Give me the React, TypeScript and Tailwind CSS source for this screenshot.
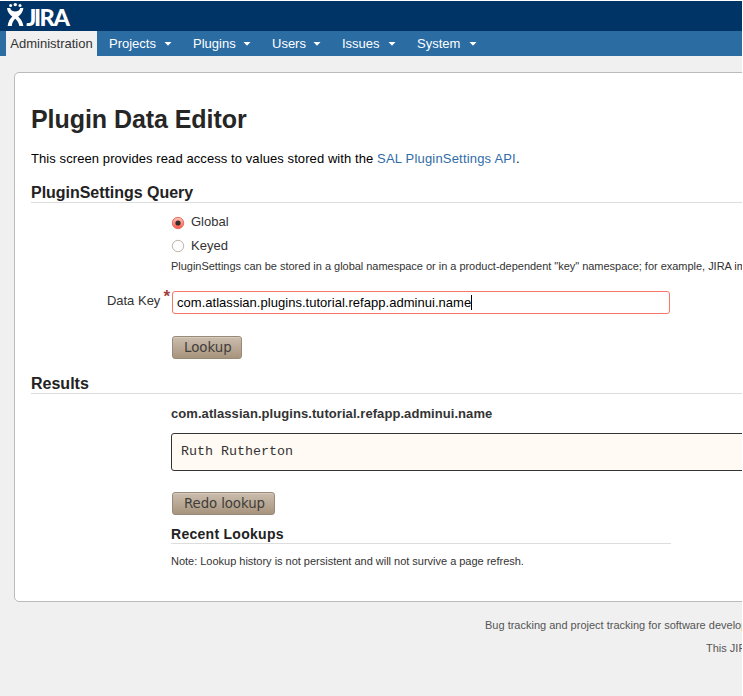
import React from "react";

const menus = [
  { label: "Projects", width: "w-[84px]" },
  { label: "Plugins", width: "w-[79px]" },
  { label: "Users", width: "w-[70px]" },
  { label: "Issues", width: "w-[75px]" },
  { label: "System", width: "w-[81px]" },
];

function Logo() {
  return (
    <svg width="80" height="30" viewBox="0 0 80 30" role="img" aria-label="JIRA" className="block">
      <g fill="#fff">
        <circle cx="5.6" cy="4.4" r="1.5" />
        <circle cx="10.3" cy="3.6" r="1.7" />
        <circle cx="15" cy="4.4" r="1.5" />
        <path d="M2 7 L5.2 7 C5.8 9.6 8 10.4 10.2 10.4 C12.4 10.4 14.6 9.6 15.2 7 L18.4 7 C18 11 15.8 13.8 13.2 15.6 C15.8 18 17.6 21 18.4 25 L14.4 25 C13.6 21.6 12 19.2 10.2 17.8 C8.6 19.2 7.2 21.6 6.8 25 L2.6 25 C3.2 21 4.8 17.8 7.3 15.5 C4.7 13.7 2.3 11 2 7 Z" />
      </g>
      <text
        x="21.2 29 34.6 48.6"
        y="25.2 24.6 24.6 24.6"
        fill="#fff"
        fontFamily="Lato, sans-serif"
        fontWeight="900"
        fontSize="23.5"
      >
        JIRA
      </text>
    </svg>
  );
}

function Caret() {
  return (
    <svg width="8" height="4" viewBox="0 0 8 4" fill="#fff">
      <path d="M0.5 0H7.5L4 3.7Z" />
    </svg>
  );
}

function Button({ children, className }: { children: React.ReactNode; className: string }) {
  return (
    <button
      className={`block h-[23px] rounded-[3px] border border-[#998a77] bg-linear-to-b from-[#cbbdae] to-[#a7947d] pl-[11px] text-left font-['DejaVu_Sans',sans-serif] text-[13.33px] leading-[20px] text-[#403e3b] shadow-[inset_0_1px_0_#d6cbbf] ${className}`}
    >
      {children}
    </button>
  );
}

function Radio({ checked, label }: { checked?: boolean; label: string }) {
  return (
    <label className="flex h-6 items-center">
      <svg width="14" height="14" viewBox="0 0 14 14" className={checked ? "mt-[2px]" : ""}>
        <defs>
          <linearGradient id="dot" x1="0" y1="0" x2="0" y2="1">
            <stop offset="0" stopColor="#ffc4bb" />
            <stop offset="1" stopColor="#fb5a48" />
          </linearGradient>
        </defs>
        <circle cx="7" cy="7" r="5.7" fill={checked ? "url(#dot)" : "#fff"} stroke={checked ? "#e8705f" : "#c0b7a8"} />
        {checked && <circle cx="7" cy="7" r="2.6" fill="#352b29" />}
      </svg>
      <span className="ml-[6px]">{label}</span>
    </label>
  );
}

export default function App() {
  return (
    <div className="h-[696px] w-[742px] overflow-hidden bg-[#f0f0f0] font-['Liberation_Sans',Arial,sans-serif] text-[13px] text-[#333]">
      <header className="h-[31px] border-t border-white bg-[#003366] pl-[5px]">
        <Logo />
      </header>
      <nav className="flex h-[25px] bg-[#2b6ca3] pl-[6px] leading-[25px] text-white">
        <div className="w-[91px] bg-[#f0f0f0] text-center text-[#333]">Administration</div>
        {menus.map((m) => (
          <div key={m.label} className={`flex items-center justify-between pl-3 pr-[9px] ${m.width} whitespace-nowrap`}>
            <span>{m.label}</span>
            <Caret />
          </div>
        ))}
      </nav>

      <main className="ml-[14px] mt-4 h-[530px] w-[1000px] rounded-[5px] border border-[#bbb] bg-white pl-4 pt-[31px]">
        <h1 className="text-[25px] font-bold leading-[30px] tracking-[-0.06px] text-[#262626]">Plugin Data Editor</h1>
        <p className="mt-[15px] leading-5 tracking-[0.085px] text-black">
          This screen provides read access to values stored with the <a className="tracking-[0.19px] text-[#326ca6]">SAL PluginSettings API</a>.
        </p>
        <h2 className="mt-[14px] h-5 border-b border-[#ddd] text-[16px] font-bold leading-5 tracking-[-0.03px] text-[#222]">PluginSettings Query</h2>

        <div className="ml-[140px] mt-[7px]">
          <Radio checked label="Global" />
          <Radio label="Keyed" />
          <p className="whitespace-nowrap text-[11px] leading-4 tracking-[-0.025px]">
            PluginSettings can be stored in a global namespace or in a product-dependent "key" namespace; for example, JIRA implements
          </p>
        </div>
        <div className="mt-[17px] flex">
          <label className="w-[140px] pr-px text-right leading-5">
            Data Key<span className="ml-[3px] inline-block align-[3px] text-[17px] font-bold leading-3 text-[#a34040]">*</span>
          </label>
          <div className="ml-px flex h-[23px] w-[498px] items-center rounded-[3px] border border-[#f87766] bg-white pl-1 tracking-[0.03px] text-black">
            com.atlassian.plugins.tutorial.refapp.adminui.name
            <span className="h-[15px] w-px bg-black" />
          </div>
        </div>
        <Button className="ml-[141px] mt-[22px] w-[70px]">Lookup</Button>

        <h2 className="mt-[15px] h-5 border-b border-[#ddd] text-[16px] font-bold leading-5 text-[#222]">Results</h2>
        <section className="ml-[140px] mt-[10px]">
          <h3 className="font-bold leading-5 tracking-[0.07px]">com.atlassian.plugins.tutorial.refapp.adminui.name</h3>
          <pre className="mt-[9px] h-[38px] rounded-[3px] border border-[#333] bg-[#fffbf4] pl-[9px] font-['Liberation_Mono',monospace] text-[13.33px] leading-9">Ruth Rutherton</pre>
          <Button className="ml-px mt-[21px] w-[103px] tracking-[-0.1px]">Redo lookup</Button>
          <h3 className="mt-[9px] h-5 w-[500px] border-b border-[#ddd] text-[14px] font-bold leading-5 tracking-[0.28px] text-[#222]">Recent Lookups</h3>
          <p className="mt-[9px] text-[11px] leading-4 tracking-[-0.015px]">Note: Lookup history is not persistent and will not survive a page refresh.</p>
        </section>
      </main>

      <footer className="mt-[15px] whitespace-nowrap text-[11px] leading-4 text-[#555]">
        <p className="ml-[485px]">Bug tracking and project tracking for software development</p>
        <p className="ml-[706px] mt-[7px]">This JIRA site</p>
      </footer>
    </div>
  );
}
